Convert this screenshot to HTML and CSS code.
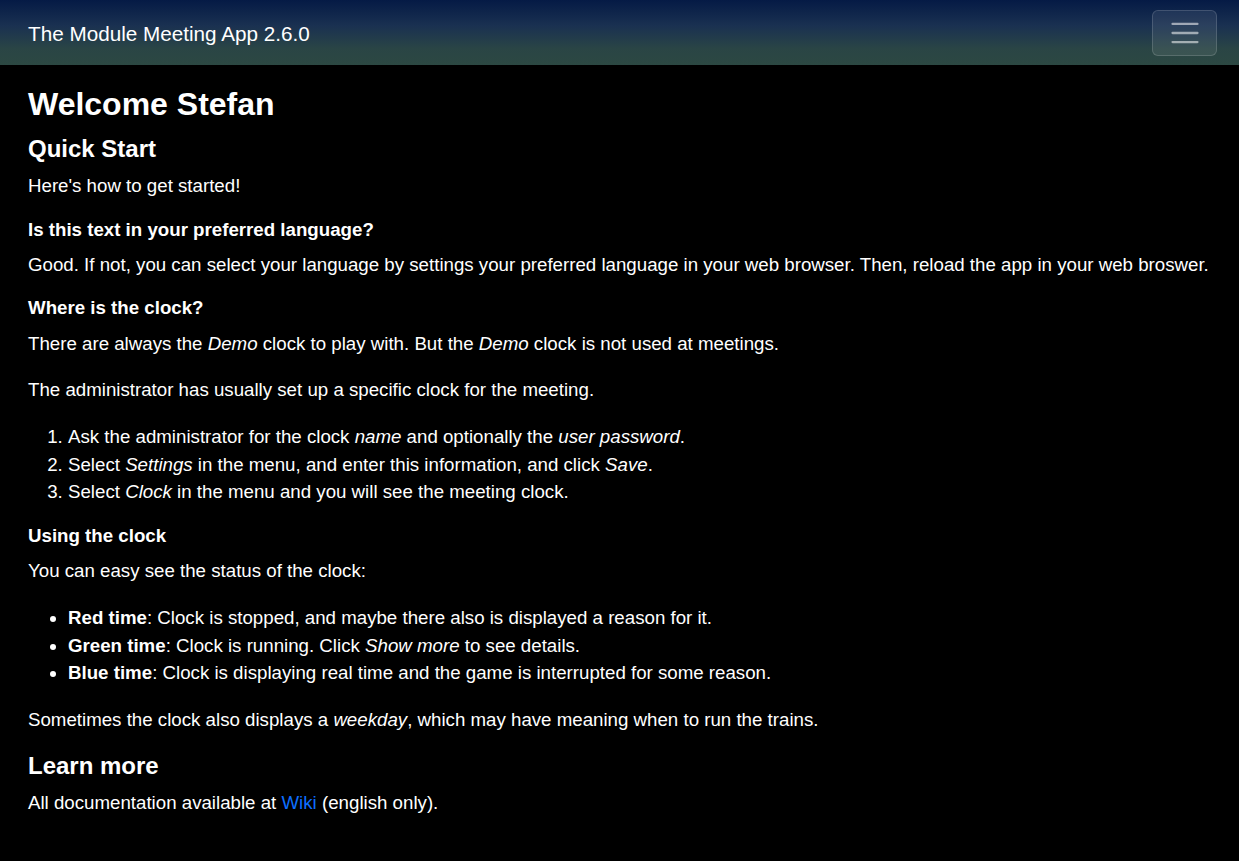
FILE: index.html
```html
<!DOCTYPE html>
<html lang="en">
<head>
<meta charset="utf-8">
<title>The Module Meeting App</title>
<link rel="stylesheet" href="styles.css">
</head>
<body>
<nav class="navbar">
  <span class="brand">The Module Meeting App 2.6.0</span>
  <button class="toggler" aria-label="Toggle navigation">
    <svg width="30" height="30" viewBox="0 0 30 30" aria-hidden="true">
      <path d="M4 7h22M4 15h22M4 23h22" stroke="rgba(255,255,255,0.55)" stroke-width="2" stroke-linecap="round"/>
    </svg>
  </button>
</nav>
<main class="content">
  <h1 class="title">Welcome Stefan</h1>
  <h2 class="section">Quick Start</h2>
  <p>Here's how to get started!</p>
  <h6 class="sub">Is this text in your preferred language?</h6>
  <p>Good. If not, you can select your language by settings your preferred language in your web browser. Then, reload the app in your web broswer.</p>
  <h6 class="sub">Where is the clock?</h6>
  <p>There are always the <em>Demo</em> clock to play with. But the <em>Demo</em> clock is not used at meetings.</p>
  <p>The administrator has usually set up a specific clock for the meeting.</p>
  <ol class="list">
    <li>Ask the administrator for the clock <em>name</em> and optionally the <em>user password</em>.</li>
    <li>Select <em>Settings</em> in the menu, and enter this information, and click <em>Save</em>.</li>
    <li>Select <em>Clock</em> in the menu and you will see the meeting clock.</li>
  </ol>
  <h6 class="sub">Using the clock</h6>
  <p>You can easy see the status of the clock:</p>
  <ul class="list">
    <li><strong>Red time</strong>: Clock is stopped, and maybe there also is displayed a reason for it.</li>
    <li><strong>Green time</strong>: Clock is running. Click <em>Show more</em> to see details.</li>
    <li><strong>Blue time</strong>: Clock is displaying real time and the game is interrupted for some reason.</li>
  </ul>
  <p>Sometimes the clock also displays a <em>weekday</em>, which may have meaning when to run the trains.</p>
  <h2 class="section">Learn more</h2>
  <p>All documentation available at <a href="#" class="link">Wiki</a> (english only).</p>
</main>
</body>
</html>
```
FILE: styles.css
```css
html, body {
  margin: 0;
  padding: 0;
  background: #000;
  color: #fff;
  font-family: "Liberation Sans", Arial, sans-serif;
  font-size: 18.7px;
  line-height: 27.6px;
}
.navbar {
  height: 65px;
  box-sizing: border-box;
  display: flex;
  align-items: center;
  justify-content: space-between;
  padding: 0 22px 0 28px;
  background: linear-gradient(to bottom, #051a45 0%, #1a3151 40%, #2a4545 75%, #2c4842 100%);
}
.brand {
  font-size: 20.7px;
  line-height: 30px;
  margin-top: 2px;
  color: #fff;
}
.toggler {
  width: 65px;
  height: 46px;
  margin-top: 1px;
  display: flex;
  align-items: center;
  justify-content: center;
  background: rgba(255, 255, 255, 0.08);
  border: 1px solid rgba(255, 255, 255, 0.15);
  border-radius: 6px;
  padding: 0;
}
.toggler svg {
  width: 34px;
  height: 34px;
}
.content {
  padding: 20px 28px 20px 28px;
}
.title {
  font-size: 32px;
  line-height: 1.2;
  font-weight: 700;
  margin: 0 0 12px 0;
}
.section {
  font-size: 24px;
  line-height: 1.2;
  font-weight: 700;
  margin: 0 0 8px 0;
}
.sub {
  font-size: 18.7px;
  line-height: 22px;
  font-weight: 700;
  margin: 0 0 10.5px 0;
}
p {
  margin: 0 0 18.8px 0;
}
.list {
  margin: 0 0 18.8px 0;
  padding-left: 40px;
}
.list li {
  line-height: 27.8px;
}
.link {
  color: #0d6efd;
  text-decoration: none;
}
```
